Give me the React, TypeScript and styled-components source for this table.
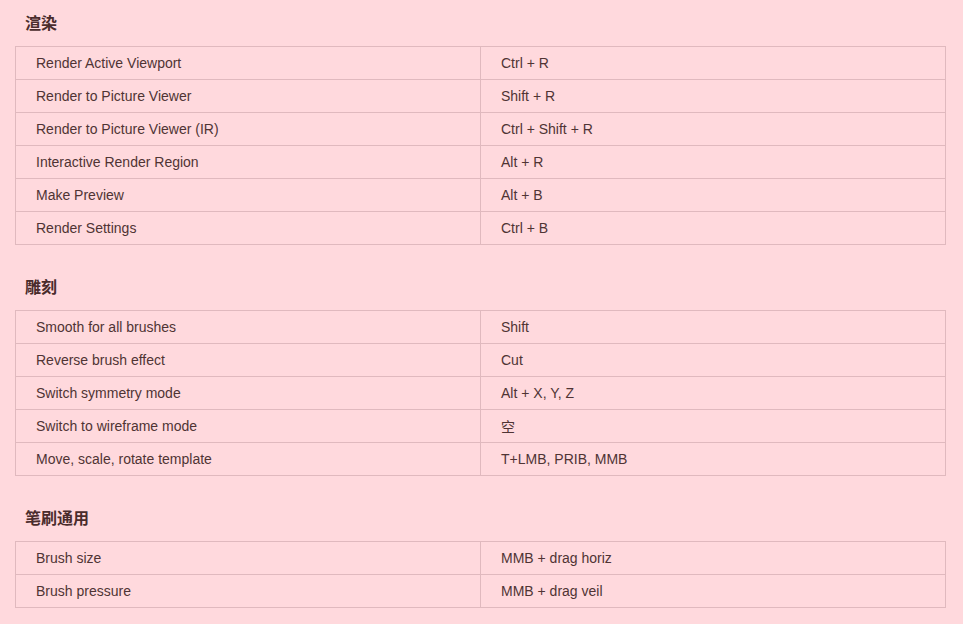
import React from "react";
import styled, { createGlobalStyle } from "styled-components";

const Global = createGlobalStyle`
  html, body { margin: 0; padding: 0; background: #ffd9dd; }
  body { font-family: "Liberation Sans", Arial, "Noto Sans CJK SC", sans-serif; }
`;

const Page = styled.div`
  padding: 0 17px 0 15px;
  display: flex;
  flex-direction: column;
  gap: 19px;
`;

const Section = styled.section`
  display: flex;
  flex-direction: column;
`;

const Heading = styled.h3`
  margin: 0;
  padding: 13px 10px 11px;
  font-size: 16px;
  line-height: 22px;
  font-weight: bold;
  color: #4a2c2c;
  font-family: "Liberation Sans", "Noto Sans CJK SC", sans-serif;
`;

const Table = styled.table`
  width: 100%;
  border-collapse: collapse;
  table-layout: fixed;
`;

const Cell = styled.td`
  width: 50%;
  height: 33px;
  padding: 0 20px;
  border: 1px solid #e0b9be;
  font-size: 14px;
  color: #4f3434;
  vertical-align: middle;
  box-sizing: border-box;
  font-family: "Liberation Sans", "Noto Sans CJK SC", sans-serif;
`;

type Row = [string, string];

const sections: { title: string; rows: Row[] }[] = [
  {
    title: "渲染",
    rows: [
      ["Render Active Viewport", "Ctrl + R"],
      ["Render to Picture Viewer", "Shift + R"],
      ["Render to Picture Viewer (IR)", "Ctrl + Shift + R"],
      ["Interactive Render Region", "Alt + R"],
      ["Make Preview", "Alt + B"],
      ["Render Settings", "Ctrl + B"],
    ],
  },
  {
    title: "雕刻",
    rows: [
      ["Smooth for all brushes", "Shift"],
      ["Reverse brush effect", "Cut"],
      ["Switch symmetry mode", "Alt + X, Y, Z"],
      ["Switch to wireframe mode", "空"],
      ["Move, scale, rotate template", "T+LMB, PRIB, MMB"],
    ],
  },
  {
    title: "笔刷通用",
    rows: [
      ["Brush size", "MMB + drag horiz"],
      ["Brush pressure", "MMB + drag veil"],
    ],
  },
];

export default function App() {
  return (
    <>
      <Global />
      <Page>
        {sections.map((s) => (
          <Section key={s.title}>
            <Heading>{s.title}</Heading>
            <Table>
              <tbody>
                {s.rows.map(([a, b]) => (
                  <tr key={a}>
                    <Cell>{a}</Cell>
                    <Cell>{b}</Cell>
                  </tr>
                ))}
              </tbody>
            </Table>
          </Section>
        ))}
      </Page>
    </>
  );
}
